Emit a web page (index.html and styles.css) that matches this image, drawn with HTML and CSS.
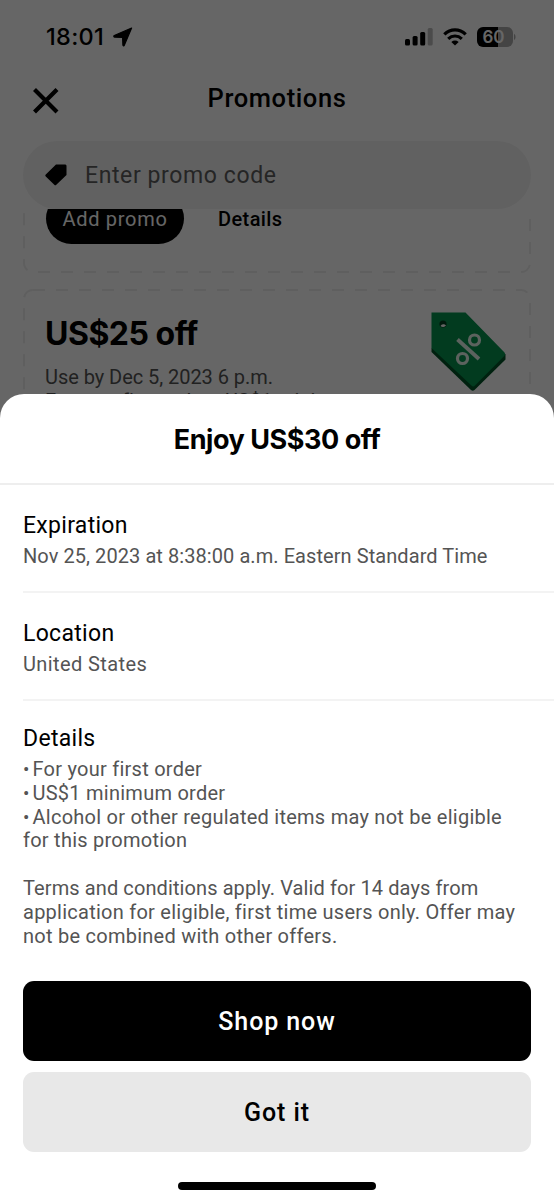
FILE: index.html
```html
<!DOCTYPE html>
<html lang="en">
<head>
<meta charset="utf-8">
<title>Promotions</title>
<link rel="stylesheet" href="styles.css">
</head>
<body>
<div class="screen">
  <div class="page">
    <div class="status">
      <span class="clock">18:01</span>
      <svg class="locate" width="20" height="20" viewBox="0 0 20 20"><path d="M18.600 1 11.200 18.400q-.9 1.300-1.300-.2L9.600 10.400 1.600 10.100q-1.500-.4-.3-1.600Z" stroke="#000" stroke-width="1.200" stroke-linejoin="round"/></svg>
      <svg class="signal" width="28" height="18" viewBox="0 0 28 18"><rect x="0" y="11" width="5" height="6.500" rx="1.500"/><rect x="7.600" y="8" width="5" height="9.500" rx="1.500"/><rect x="15.200" y="4" width="5" height="13.500" rx="1.500"/><rect x="22.700" y="0" width="5" height="17.500" rx="1.500" fill="#bbb"/></svg>
      <svg class="wifi" width="24" height="18" viewBox="0 0 24 18"><g fill="none" stroke="#000" stroke-width="3.200"><path d="M1.300 6.400Q6 1.800 12 1.800T22.700 6.400"/><path d="M5.200 10.800Q8.200 8 12 8t6.800 2.800"/></g><path d="M12 17.400 8.300 13.900Q12 11 15.700 13.900Z"/></svg>
      <svg class="battery" width="39" height="20" viewBox="0 0 39 20"><path d="M6 0H21.300V20H6a6 6 0 0 1-6-6V6A6 6 0 0 1 6 0Z"/><path d="M21.300 0H30a6 6 0 0 1 6 6v8a6 6 0 0 1-6 6H21.300Z" fill="#aaa"/><path d="M37 6.800q1.600 1.100 1.600 3.200T37 13.200Z" fill="#aaa"/><text class="level" x="5.500" y="16">60</text></svg>
    </div>
    <div class="titlebar">
      <svg class="close" width="26" height="26" viewBox="0 0 26 26"><path d="M1.500 1.500 24 24M24 1.500 1.500 24" stroke="#000" stroke-width="4.200"/></svg>
      <h1 class="title">Promotions</h1>
    </div>
    <div class="promo-field">
      <svg class="tag" width="22" height="22" viewBox="0 0 22 22"><path d="M11 .5H20.500L21.500 1.500V11L11.300 20.700q-1 1-2 0L.8 12.500q-1-1 0-2Z"/></svg>
      <span class="placeholder">Enter promo code</span>
    </div>
    <div class="list">
      <div class="card card-first">
        <svg class="outline" width="508" height="183"><rect x="1" y="1" width="506" height="181" rx="9"/></svg>
        <span class="add">Add promo</span>
        <span class="details-link">Details</span>
      </div>
      <div class="card card-second">
        <svg class="outline" width="508" height="200"><rect x="1" y="1" width="506" height="198" rx="9"/></svg>
        <div class="offer">
          <h2 class="offer-title">US$25 off</h2>
          <p class="offer-line">Use by Dec 5, 2023 6 p.m.</p>
          <p class="offer-line">For your first order • US$1 minimum</p>
        </div>
        <svg class="art" width="75" height="81" viewBox="0 0 75 81"><path d="M.5 36V40L40 78q1.800 1.500 3.500 0L74.500 47.500V42Z" fill="#005327"/><path d="M.5 .5H34.500L73.500 40.500q1.200 1.600 0 3.200L44 73.500q-1.800 1.800-3.600 0L.5 36Z" fill="#05944f"/><circle cx="12" cy="12" r="3.600" fill="#00401e"/><path d="M9.500 14a3.300 3.300 0 0 1 5.500-.5 3.600 3.600 0 0 1-5.500.5Z" fill="#fff"/><g fill="none" stroke="#e5f5ec" stroke-width="3.200"><path d="M26.500 27.500 48 47" stroke-width="3.800"/><circle cx="43.500" cy="28" r="5"/><circle cx="31.500" cy="46.500" r="5"/></g></svg>
      </div>
    </div>
  </div>
  <div class="scrim"></div>
  <div class="sheet">
    <header class="sheet-head">Enjoy US$30 off</header>
    <section class="row">
      <h3 class="row-title">Expiration</h3>
      <p class="text expiry">Nov 25, 2023 at 8:38:00 a.m. Eastern Standard Time</p>
    </section>
    <section class="row">
      <h3 class="row-title">Location</h3>
      <p class="text place">United States</p>
    </section>
    <section class="row row-last">
      <h3 class="row-title">Details</h3>
      <p class="text"><span class="dot">•</span>For your first order<br><span class="dot">•</span>US$1 minimum order<br><span class="dot">•</span>Alcohol or other regulated items may not be eligible<br>for this promotion</p>
      <p class="text terms"><span class="tight">Terms and conditions apply. Valid for 14 days from</span><br>application for eligible, first time users only. Offer may<br>not be combined with other offers.</p>
    </section>
    <div class="actions">
      <button class="button primary">Shop now</button>
      <button class="button secondary">Got it</button>
    </div>
    <div class="home"></div>
  </div>
</div>
</body>
</html>
```
FILE: styles.css
```css
* { box-sizing: border-box; }
body { margin: 0; font-family: Roboto, "Liberation Sans", sans-serif; color: #000; }
h1, h2, h3, p { margin: 0; font-weight: 400; }
svg { display: block; flex: none; }
.screen { position: relative; width: 554px; height: 1200px; overflow: hidden; background: #fff; }
.page { height: 1200px; display: flex; flex-direction: column; overflow: hidden; }
.status { display: flex; height: 74px; padding-left: 46px; align-items: center; }
.clock { width: 67px; font: 500 23.5px/28px Inter, sans-serif; letter-spacing: 0.3px; }
.signal { margin-left: 272px; }
.wifi { margin-left: 10px; }
.battery { margin-left: 10px; }
.level { font: 600 17px Inter, sans-serif; fill: #fff; letter-spacing: 0; }
.titlebar { position: relative; height: 67px; padding: 9px 0 0; text-align: center; }
.close { position: absolute; left: 33px; top: 14px; }
.title { font-size: 25.5px; line-height: 30px; font-weight: 500; letter-spacing: 0.6px; }
.promo-field { display: flex; flex: none; align-items: center; height: 68px; margin: 0 23px; padding-left: 22px; gap: 18px; border-radius: 34px; background: #f2f2f2; }
.placeholder { font-size: 23px; color: #5e5e5e; letter-spacing: 0.6px; }
.list { flex: none; height: 300px; overflow: hidden; padding: 0 23px; display: flex; flex-direction: column; gap: 16px; }
.card { position: relative; flex: none; display: flex; }
.card-first { height: 183px; margin-top: -119px; padding: 103px 23px 0; }
.card-second { height: 200px; padding: 23px 25px 0 22px; justify-content: space-between; }
.outline { position: absolute; inset: 0; }
.outline rect { fill: none; stroke: #ededed; stroke-width: 2; stroke-dasharray: 12 11; }
.add { width: 138px; height: 51px; border-radius: 26px; background: #000; color: #fff; text-align: center; font-size: 20px; line-height: 52px; letter-spacing: 0.7px; }
.details-link { margin-left: 34px; font-size: 20px; line-height: 52px; font-weight: 500; letter-spacing: 0.4px; }
.offer-title { font: 700 32px/44px Inter, sans-serif; letter-spacing: -0.5px; }
.offer-line { font-size: 20px; line-height: 24px; color: #545454; letter-spacing: -0.05px; }
.offer-title + .offer-line { margin-top: 9px; }
.scrim { position: absolute; inset: 0; background: rgba(0, 0, 0, .6); }
.sheet { position: absolute; left: 0; right: 0; bottom: 0; height: 806px; background: #fff; border-radius: 24px 24px 0 0; display: flex; flex-direction: column; }
.sheet-head { height: 91px; border-bottom: 2px solid #eee; text-align: center; font: 700 27px/92px Inter, sans-serif; letter-spacing: -0.45px; }
.row { height: 108px; margin-left: 23px; padding-top: 25px; border-bottom: 2px solid #f3f3f3; }
.row-title { font-size: 23px; line-height: 32px; letter-spacing: 0.3px; }
.text { margin-top: 3px; font-size: 20px; line-height: 23.75px; color: #545454; letter-spacing: 0.25px; white-space: nowrap; }
.expiry { letter-spacing: 0.07px; }
.place { letter-spacing: 0.4px; }
.tight { letter-spacing: 0.1px; }
.dot { display: inline-block; width: 9.5px; font-size: 19px; line-height: 1; letter-spacing: 0; }
.row-last { height: 280px; padding-top: 22px; border: 0; }
.terms { margin-top: 24px; }
.actions { display: flex; flex-direction: column; gap: 11px; padding: 0 23px; }
.button { height: 80px; padding: 2px 0 0; border: 0; border-radius: 11px; font: 500 25px/78px Roboto, sans-serif; letter-spacing: 0.9px; }
.primary { background: #000; color: #fff; }
.secondary { background: #e8e8e8; color: #000; }
.home { width: 198px; height: 8px; margin: 30px auto 0; border-radius: 4px; background: #000; }
```
